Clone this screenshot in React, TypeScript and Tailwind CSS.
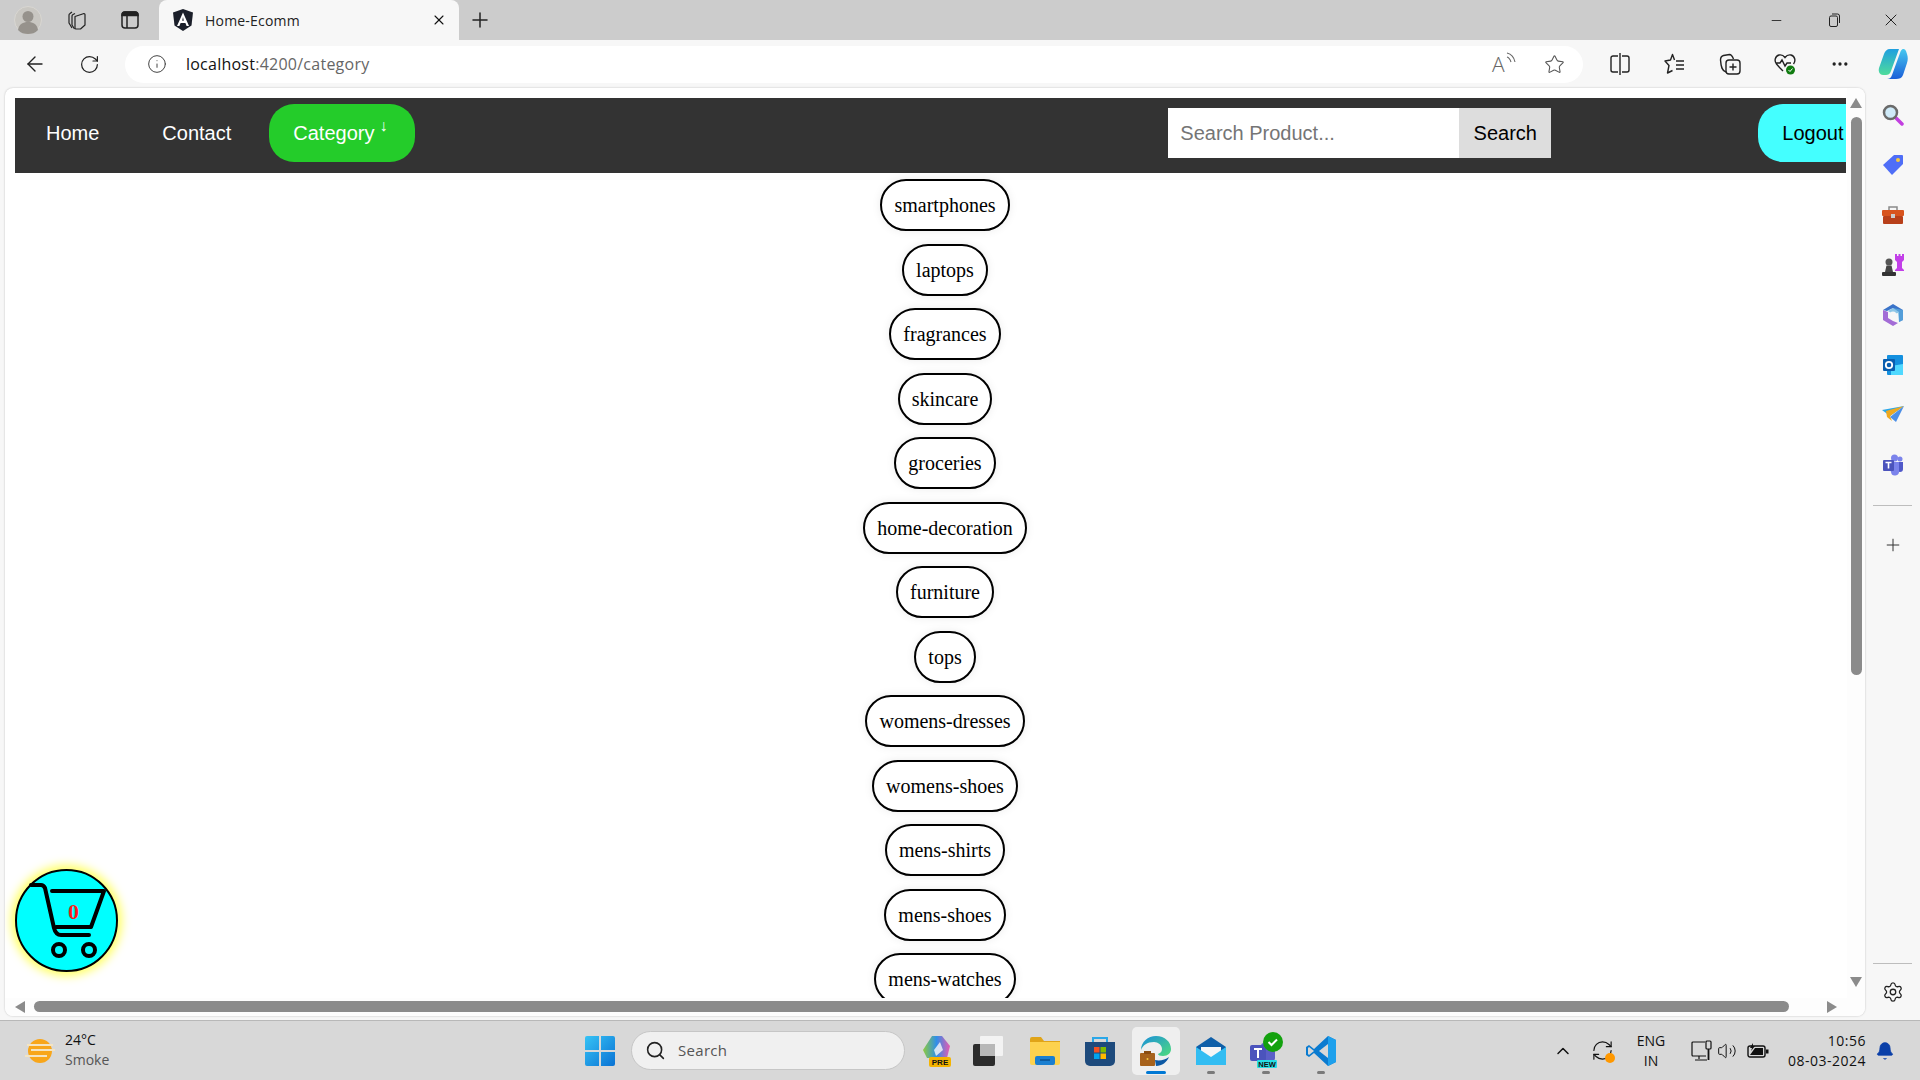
import React from 'react';
import { ArrowLeft, RotateCw, RefreshCw, Info, Star, Plus, X, Minus, Search, ChevronUp, Settings, MoreHorizontal, Volume2, Bell } from 'lucide-react';

const categories = [
  'smartphones', 'laptops', 'fragrances', 'skincare', 'groceries', 'home-decoration', 'furniture',
  'tops', 'womens-dresses', 'womens-shoes', 'mens-shirts', 'mens-shoes', 'mens-watches',
];

const Tri = ({ dir }: { dir: 'up' | 'down' | 'left' | 'right' }) => {
  const pts = { up: '0,10 6,0 12,10', down: '0,0 12,0 6,10', left: '10,0 10,12 0,6', right: '0,0 0,12 10,6' }[dir];
  return (
    <svg width="12" height="12" viewBox="0 0 12 12" className="shrink-0">
      <polygon points={pts} fill="#8b8b8b" />
    </svg>
  );
};

const TabStrip = () => (
  <div className="h-[40px] bg-[#cccccc] flex items-center shrink-0">
    <div className="w-[56px] flex justify-center">
      <svg width="28" height="28" viewBox="0 0 28 28">
        <circle cx="14" cy="14" r="13.5" fill="#c9c7c2" stroke="#d9d7d2" />
        <circle cx="14" cy="10.5" r="5.5" fill="#96928c" />
        <path d="M4 24c1-6 5-8 10-8s9 2 10 8c-3 3-6 4-10 4s-7-1-10-4z" fill="#96928c" />
      </svg>
    </div>
    <div className="w-[42px] flex justify-center">
      <svg width="20" height="20" viewBox="0 0 20 20" fill="none" stroke="#222" strokeWidth="1.2" strokeLinejoin="round">
        <path d="M8 6.500 17 3.500a1 1 0 0 1 1 1V15l-4.500 4H9a1 1 0 0 1-1-1z" />
        <path d="M8 3.500 6 4.500a2 2 0 0 0-1 2V15l2.500 4" />
        <path d="M5 2 3 3.500a2 2 0 0 0-1 2V13l3 5" />
      </svg>
    </div>
    <div className="w-[64px] flex justify-center">
      <svg width="18" height="18" viewBox="0 0 18 18" fill="none" stroke="#222" strokeWidth="1.5">
        <rect x="1" y="1" width="16" height="16" rx="3" />
        <path d="M6 5v12" />
        <path d="M1 4.500C1 2 2 1 4 1h10c2 0 3 1 3 3.500z" fill="#222" />
      </svg>
    </div>
    <div className="w-[300px] h-[40px] bg-[#f7f7f7] rounded-t-[8px] flex items-center pl-[14px] pr-[12px] relative -left-[3px]">
      <svg width="20" height="22" viewBox="0 0 20 22" className="shrink-0">
        <path d="M10 0 0 3.500 1.500 16.500 10 22l8.500-5.500L20 3.500z" fill="#1b1f2a" />
        <path d="M10 3.500 4 17h2.400l1.200-3h4.800l1.200 3H16zM9.200 11.800 10 8l.8 3.800z" fill="#fff" />
      </svg>
      <span className="ml-[12px] text-[14px] tracking-[0.2px] text-[#222] font-['Open_Sans',sans-serif] whitespace-nowrap">Home-Ecomm</span>
      <X size={16} strokeWidth={1.6} className="ml-auto text-[#111]" />
    </div>
    <Plus size={24} strokeWidth={1.5} className="text-[#222] ml-[6px]" />
    <div className="ml-auto flex items-center text-[#222]">
      <div className="w-[57px] flex justify-center"><Minus size={15} strokeWidth={1.4} /></div>
      <div className="w-[57px] flex justify-center">
        <svg width="14" height="14" viewBox="0 0 14 14" fill="none" stroke="#222" strokeWidth="1">
          <rect x="2.500" y="3" width="8" height="10.500" rx="1.500" />
          <path d="M5 1h5.500a2 2 0 0 1 2 2v7" />
        </svg>
      </div>
      <div className="w-[58px] flex justify-center"><X size={20} strokeWidth={1.2} /></div>
    </div>
  </div>
);

const Toolbar = () => (
  <div className="h-[48px] bg-[#f7f7f7] flex items-center shrink-0">
    <div className="w-[70px] flex justify-center"><ArrowLeft size={24} strokeWidth={1.4} className="text-[#222]" /></div>
    <div className="w-[40px] flex justify-center"><RotateCw size={21} strokeWidth={1.4} className="text-[#222]" /></div>
    <div className="ml-[15px] w-[1459px] h-[37px] bg-white rounded-full flex items-center">
      <Info size={20} strokeWidth={1.2} className="ml-[22px] text-[#444]" />
      <span className="ml-[19px] text-[16px] tracking-[0.25px] font-['Open_Sans',sans-serif] text-[#111] whitespace-nowrap">
        localhost<span className="text-[#666]">:4200/category</span>
      </span>
      <div className="ml-auto flex items-center pr-[18px]">
        <div className="relative w-[24px] h-[24px] text-[#666]">
          <span className="block text-[21px] leading-[24px] font-['Open_Sans',sans-serif] font-light">A</span>
          <svg width="12" height="12" viewBox="0 0 12 12" fill="none" stroke="#666" strokeWidth="1.1" className="absolute -right-[1px] top-0">
            <path d="M2 1c4 1 7 4 8 9M2 5c2 .5 3 2 4 5" />
          </svg>
        </div>
        <Star size={21} strokeWidth={1.2} className="ml-[28px] text-[#555]" />
      </div>
    </div>
    <div className="flex items-center ml-[10px]">
      <div className="w-[55px] flex justify-center">
        <svg width="20" height="22" viewBox="0 0 20 22" fill="none" stroke="#222" strokeWidth="1.4">
          <path d="M8 3H3a2 2 0 0 0-2 2v12a2 2 0 0 0 2 2h5M12 3h5a2 2 0 0 1 2 2v12a2 2 0 0 1-2 2h-5M10 0v22" />
        </svg>
      </div>
      <div className="w-[55px] flex justify-center">
        <svg width="22" height="22" viewBox="0 0 22 22" fill="none" stroke="#222" strokeWidth="1.4" strokeLinejoin="round">
          <path d="M10.500 7 8.500 1.500 6.500 7 1 8l4 4.500L3.500 20l5-2.500" />
          <path d="M12 8h8M12 12h8M12 16h8" />
        </svg>
      </div>
      <div className="w-[55px] flex justify-center">
        <svg width="22" height="22" viewBox="0 0 22 22" fill="none" stroke="#222" strokeWidth="1.4">
          <rect x="7" y="7" width="14" height="14" rx="3" />
          <path d="M14 10.500v7M10.500 14h7M7 19C3 18 2 14 1.500 7c0-2 1-4 3-4.500l6-1c2 0 3 2 4 4.500" />
        </svg>
      </div>
      <div className="w-[55px] flex justify-center">
        <svg width="22" height="22" viewBox="0 0 22 22" fill="none">
          <path d="M6 15 2.500 11C0 8 1 3 5 2c2.500-.5 4.500.5 6 2.500C12.500 2.500 14.500 1.500 17 2c4 1 5 6 2.500 9M2 10h4l2-3 3 6 2-3h4M6 15l3 3" stroke="#222" strokeWidth="1.4" />
          <circle cx="16.500" cy="17" r="4.500" fill="#107c10" />
          <path d="m14.500 17 1.500 1.500 2.500-3" stroke="#fff" strokeWidth="1" />
        </svg>
      </div>
      <div className="w-[54px] flex justify-center"><MoreHorizontal size={20} strokeWidth={2} className="text-[#222]" /></div>
      <div className="w-[53px] flex justify-center">
        <svg width="30" height="32" viewBox="0 0 30 32">
          <defs>
            <linearGradient id="cp1" x1="0" y1="0" x2="0" y2="1">
              <stop offset="0" stopColor="#1f9fe0" />
              <stop offset="1" stopColor="#4fdc9c" />
            </linearGradient>
            <linearGradient id="cp2" x1="0" y1="0" x2="0" y2="1">
              <stop offset="0" stopColor="#45c8f0" />
              <stop offset="1" stopColor="#1b5fd8" />
            </linearGradient>
          </defs>
          <path d="M12 1h9l-8 22c-1 3-3 4-5 4H5C2 27 0 24 1 20L6 6c1-3 3-5 6-5z" fill="url(#cp1)" />
          <path d="M18 31H9c2 0 4-1 5-4l8-22c1-3 2-4 3-4 2 0 3 1 4 5 1 3 1 6 0 9l-4 12c-1 3-4 4-7 4z" fill="url(#cp2)" />
        </svg>
      </div>
    </div>
  </div>
);

const CartBadge = () => (
  <div className="absolute left-[10px] top-[781px] w-[103px] h-[103px] rounded-full bg-[#00ffff] border-2 border-black shadow-[0_0_10px_4px_#ffff66]">
    <svg width="99" height="99" viewBox="0 0 99 99" fill="none" stroke="#000" strokeWidth="4" strokeLinecap="round" strokeLinejoin="round">
      <path d="M14 14h10c2 0 3 1 4 3l9 40c1 4 3 7 7 7h28" />
      <path d="M35 20h52l-13 36H39" />
      <circle cx="42" cy="79" r="6" />
      <circle cx="72" cy="79" r="6" />
    </svg>
    <span className="absolute left-[51px] top-[30px] text-[22px] leading-[22px] font-bold text-[#ff1a1a] font-['Liberation_Serif',serif]">0</span>
  </div>
);

const NavBar = () => (
  <nav className="w-[1831px] h-[75px] mt-[10px] ml-[10px] pb-[5px] bg-[#333333] flex items-center overflow-hidden shrink-0 font-['Liberation_Sans',sans-serif] text-[20px]">
    <a className="ml-[31px] text-white shrink-0">Home</a>
    <a className="ml-[63px] text-white shrink-0">Contact</a>
    <a className="ml-[38px] h-[58px] w-[146px] shrink-0 pl-[24px] rounded-[25px] bg-[#24cc2a] text-white flex items-center">
      Category
      <span className="ml-[5px] -mt-[14px] text-[16px] font-bold leading-none">↓</span>
    </a>
    <div className="ml-[753px] flex shrink-0">
      <input
        readOnly
        placeholder="Search Product..."
        className="w-[291px] h-[50px] bg-white px-[12px] text-[20px] text-black placeholder:text-[#757575] outline-none"
      />
      <button className="w-[92px] h-[50px] bg-[#dddddd] text-black text-center">Search</button>
    </div>
    <a className="ml-[207px] h-[58px] w-[120px] shrink-0 pl-[24px] rounded-l-[25px] bg-[#44ffff] text-black flex items-center">Logout</a>
  </nav>
);

const Panel = () => (
  <div className="ml-[5px] w-[1860px] h-[928px] bg-white rounded-[8px] shadow-[0_0_2px_rgba(0,0,0,0.25)] flex flex-col overflow-hidden relative">
    <div className="flex h-[910px]">
      <div className="w-[1842px] overflow-hidden flex flex-col">
        <NavBar />
        <ul className="w-[1880px] shrink-0 flex flex-col items-center gap-[12.5px] pt-[6px] font-['Liberation_Serif',serif] text-[20px] text-black">
          {categories.map((c) => (
            <li key={c} className="h-[52px] px-[12px] border-2 border-black rounded-[26px] flex items-center shrink-0 bg-white shadow-[0_0_10px_rgba(0,0,0,0.08)]">
              {c}
            </li>
          ))}
        </ul>
      </div>
      <div className="w-[18px] bg-[#fdfdfd] flex flex-col items-center pt-[10px]">
        <Tri dir="up" />
        <div className="w-[11px] h-[558px] mt-[7px] rounded-full bg-[#8b8b8b]" />
        <div className="mt-auto mb-[9px]"><Tri dir="down" /></div>
      </div>
    </div>
    <div className="h-[18px] bg-[#fdfdfd] flex items-center pl-[10px] pb-[1px]">
      <Tri dir="left" />
      <div className="ml-[7px] w-[1755px] h-[11px] rounded-full bg-[#8b8b8b]" />
      <div className="ml-[38px]"><Tri dir="right" /></div>
    </div>
    <CartBadge />
  </div>
);

const SideIcon = ({ children }: { children: React.ReactNode }) => (
  <div className="h-[50px] flex items-center justify-center shrink-0">{children}</div>
);

const Sidebar = () => (
  <div className="w-[55px] h-[932px] bg-[#f7f7f7] flex flex-col items-stretch pt-[2px]">
    <SideIcon>
      <svg width="22" height="22" viewBox="0 0 22 22">
        <path d="m13 13 7 7" stroke="#c23fe0" strokeWidth="3.500" strokeLinecap="round" />
        <circle cx="8.500" cy="8.500" r="6.500" fill="#cfeaf8" stroke="#6a6a6a" strokeWidth="2.500" />
      </svg>
    </SideIcon>
    <SideIcon>
      <svg width="22" height="22" viewBox="0 0 22 22">
        <path d="M12 1h8a1 1 0 0 1 1 1v8L10 21 1 11z" fill="#4f6ef7" />
        <circle cx="16" cy="6" r="2" fill="#f5c842" />
      </svg>
    </SideIcon>
    <SideIcon>
      <svg width="24" height="20" viewBox="0 0 24 20">
        <path d="M8 5V2h8v3" fill="none" stroke="#8a8a8a" strokeWidth="1.500" />
        <rect x="1" y="5" width="22" height="6" rx="1" fill="#d8541e" />
        <rect x="2" y="11" width="20" height="8" rx="1" fill="#b8401a" />
        <rect x="10" y="9" width="4" height="4" fill="#ccc" />
      </svg>
    </SideIcon>
    <SideIcon>
      <svg width="24" height="24" viewBox="0 0 24 24">
        <path d="M14 1h2v2h1.500V1h2v2H21V1h2v6l-2 2v6l2 2v1h-9v-1l2-2V9l-2-2z" fill="#c23fe8" />
        <circle cx="8" cy="9" r="3.500" fill="#555" />
        <path d="M5.500 12.500h5l1.500 6.500H4z" fill="#444" />
        <rect x="1" y="19" width="14" height="4" rx="1" fill="#333" />
      </svg>
    </SideIcon>
    <SideIcon>
      <svg width="22" height="24" viewBox="0 0 22 24">
        <path d="M11 1 21 7v10l-4 2V9l-6-4-6 3-4-1z" fill="#3a73c9" />
        <path d="M1 7v10l10 6 5-3-5-2-5-3V9z" fill="#a36cd6" />
        <path d="M21 7 11 5l-5 3 5 3 5-1 1 9 4-2z" fill="#5fb0e0" opacity="0.7" />
        <circle cx="11" cy="12" r="3.500" fill="#f7f7f7" />
      </svg>
    </SideIcon>
    <SideIcon>
      <svg width="22" height="22" viewBox="0 0 22 22">
        <rect x="5" y="1" width="16" height="20" rx="1" fill="#1490df" />
        <path d="M9 12 21 10v11H9z" fill="#50d9ff" />
        <rect x="1" y="5" width="12" height="12" rx="1" fill="#0a5fb0" />
        <circle cx="7" cy="11" r="3.200" fill="none" stroke="#fff" strokeWidth="1.800" />
      </svg>
    </SideIcon>
    <SideIcon>
      <svg width="22" height="18" viewBox="0 0 22 18">
        <path d="M0 4 22 0 8 10z" fill="#2aa7e8" />
        <path d="M4 5 22 0 8 10l2 5-5-4z" fill="#f0a91e" />
        <path d="M22 0 14 16 8 11z" fill="#4c8fe6" />
      </svg>
    </SideIcon>
    <SideIcon>
      <svg width="22" height="22" viewBox="0 0 22 22">
        <circle cx="18" cy="5" r="2.500" fill="#7b83eb" />
        <circle cx="12.500" cy="4" r="3.500" fill="#7b83eb" />
        <path d="M15 8h6v7a3 3 0 0 1-6 0z" fill="#5059c9" />
        <path d="M6 8h11v9a4 4 0 0 1-8 1z" fill="#7b83eb" />
        <rect x="1" y="6" width="11" height="11" rx="1" fill="#4b53bc" />
        <path d="M3.500 8.500h6M6.500 8.500v6" stroke="#fff" strokeWidth="1.600" />
      </svg>
    </SideIcon>
    <div className="mx-[8px] mt-[15px] h-px bg-[#bdbdbd]" />
    <div className="h-[78px] flex items-center justify-center shrink-0">
      <Plus size={20} strokeWidth={1.2} className="text-[#333]" />
    </div>
    <div className="mt-auto mx-[8px] h-px bg-[#bdbdbd]" />
    <div className="h-[56px] flex items-center justify-center">
      <Settings size={22} strokeWidth={1.4} className="text-[#222]" />
    </div>
  </div>
);

const TaskIcon = ({ children, w, active, dot }: { children: React.ReactNode; w: number; active?: boolean; dot?: boolean }) => (
  <div style={{ width: w }} className="h-[48px] flex items-center justify-center relative shrink-0">
    {active && <div className="absolute inset-y-0 left-1/2 -ml-[24px] w-[48px] bg-[#efefef] rounded-[5px]" />}
    <div className="relative flex items-center justify-center">{children}</div>
    {active && <div className="absolute bottom-[1px] left-1/2 -ml-[10px] w-[20px] h-[3px] rounded-full bg-[#0078d4]" />}
    {dot && <div className="absolute bottom-[1px] left-1/2 -ml-[4px] w-[8px] h-[3px] rounded-full bg-[#7a7a7a]" />}
  </div>
);

const Taskbar = () => (
  <div className="h-[60px] bg-[#d8d8d8] border-t border-[#b8b8b8] flex items-center relative shrink-0 font-['Open_Sans',sans-serif]">
    <div className="w-[25px] shrink-0" />
    <svg width="32" height="28" viewBox="0 0 32 28" className="shrink-0">
      <circle cx="15" cy="14" r="12" fill="#f8a61a" />
      <path d="M2 8h26M6 13h24M0 19h22" stroke="#f4e4c2" strokeWidth="2" />
    </svg>
    <div className="ml-[8px] w-[520px] shrink-0 text-[14px] leading-[20px] -mt-[2px]">
      <div className="text-[#111]">24°C</div>
      <div className="text-[#555]">Smoke</div>
    </div>
    <svg width="30" height="30" viewBox="0 0 30 30" className="shrink-0">
      <defs>
        <linearGradient id="win" x1="0" y1="0" x2="1" y2="1">
          <stop offset="0" stopColor="#36c3f5" />
          <stop offset="1" stopColor="#0a72d4" />
        </linearGradient>
      </defs>
      <path d="M0 2a2 2 0 0 1 2-2h12v14H0zM16 0h12a2 2 0 0 1 2 2v12H16zM0 16h14v14H2a2 2 0 0 1-2-2zM16 16h14v12a2 2 0 0 1-2 2H16z" fill="url(#win)" />
    </svg>
    <div className="ml-[16px] w-[274px] h-[39px] rounded-full bg-[#f0f0f0] border border-[#c6c6c6] flex items-center pl-[13px] shrink-0">
      <Search size={21} strokeWidth={1.8} className="text-[#222]" />
      <span className="ml-[12px] text-[15px] tracking-[0.3px] text-[#555]">Search</span>
    </div>
    <div className="ml-[4px] flex items-center shrink-0">
      <TaskIcon w={56}>
        <svg width="30" height="34" viewBox="0 0 30 34">
          <defs>
            <linearGradient id="tcp" x1="0" y1="0" x2="1" y2="0">
              <stop offset="0" stopColor="#8ecb3c" />
              <stop offset="0.5" stopColor="#2f8fe8" />
              <stop offset="1" stopColor="#e85ab0" />
            </linearGradient>
          </defs>
          <path d="M10 2h10l8 10-3 12H5L1 16z" fill="url(#tcp)" />
          <path d="M12 16 18 8l3 8-7 6z" fill="#f7f7f7" opacity="0.8" />
          <rect x="7" y="23" width="22" height="10" rx="2" fill="#f5b400" />
          <text x="18" y="31" textAnchor="middle" fontSize="8" fontWeight="700" fill="#111" fontFamily="Liberation Sans">PRE</text>
        </svg>
      </TaskIcon>
      <TaskIcon w={46}>
        <svg width="30" height="30" viewBox="0 0 30 30">
          <rect x="0" y="8" width="22" height="22" rx="2" fill="#2c2c2c" />
          <rect x="7" y="0" width="23" height="20" rx="1" fill="#f6f6f6" opacity="0.9" />
          <rect x="7" y="8" width="15" height="12" fill="#b8b8b8" />
        </svg>
      </TaskIcon>
      <TaskIcon w={68}>
        <svg width="30" height="28" viewBox="0 0 30 28">
          <path d="M0 2a2 2 0 0 1 2-2h9l3 4h16v6H0z" fill="#e0a418" />
          <path d="M0 5h30v21a2 2 0 0 1-2 2H2a2 2 0 0 1-2-2z" fill="#fdd24e" />
          <rect x="5" y="19" width="20" height="9" rx="2" fill="#1a7fd0" />
          <path d="M10 23h10" stroke="#0a4f8f" strokeWidth="1.500" />
        </svg>
      </TaskIcon>
      <TaskIcon w={42}>
        <svg width="30" height="30" viewBox="0 0 30 30">
          <path d="M8 7V2h14v5" fill="none" stroke="#2aa7e8" strokeWidth="2" />
          <path d="M0 6h30v19a5 5 0 0 1-5 5H5a5 5 0 0 1-5-5z" fill="#1d4a7c" />
          <rect x="9" y="11" width="5.500" height="5.500" fill="#f25022" />
          <rect x="15.500" y="11" width="5.500" height="5.500" fill="#7fba00" />
          <rect x="9" y="17.500" width="5.500" height="5.500" fill="#00a4ef" />
          <rect x="15.500" y="17.500" width="5.500" height="5.500" fill="#ffb900" />
        </svg>
      </TaskIcon>
      <TaskIcon w={70} active>
        <svg width="32" height="30" viewBox="0 0 32 30">
          <defs>
            <linearGradient id="edg" x1="0" y1="0" x2="1" y2="1">
              <stop offset="0" stopColor="#1a8fdc" />
              <stop offset="1" stopColor="#4fdc7c" />
            </linearGradient>
          </defs>
          <path d="M1 14C1 6 8 0 16 0c9 0 15 6 15 13 0 4-3 7-8 7-3 0-5-1-5-2 3-1 4-3 4-5 0-4-4-7-8-7C7 6 3 9 1 14z" fill="url(#edg)" />
          <path d="M29 21c-2 5-7 9-13 9l-1-6c5 1 10 0 14-3z" fill="#0c59a4" />
          <rect x="0" y="17" width="15" height="13" rx="1" fill="#a7621c" />
          <rect x="4" y="15" width="7" height="3" fill="#8a4d12" />
          <circle cx="7.500" cy="23" r="1" fill="#f5c842" />
        </svg>
      </TaskIcon>
      <TaskIcon w={40} dot>
        <svg width="30" height="28" viewBox="0 0 30 28">
          <path d="M15 0 30 10v18H0V10z" fill="#0f5fa8" />
          <path d="M5 10h20v8l-10 6-10-6z" fill="#f6f6f6" />
          <path d="M0 10l15 10 15-10v18H0z" fill="#33bdf2" />
        </svg>
      </TaskIcon>
      <TaskIcon w={70} dot>
        <svg width="34" height="36" viewBox="0 0 34 36" className="overflow-visible">
          <rect x="12" y="10" width="14" height="18" rx="3" fill="#5b5fc7" />
          <rect x="1" y="12" width="16" height="16" rx="2" fill="#4b53bc" />
          <path d="M5 16h8M9 16v9" stroke="#fff" strokeWidth="2" />
          <rect x="8" y="27" width="20" height="8" rx="1" fill="#27dfe5" />
          <text x="18" y="34" textAnchor="middle" fontSize="7.500" fontWeight="700" fill="#111" fontFamily="Liberation Sans">NEW</text>
          <circle cx="24" cy="9" r="10" fill="#13a10e" />
          <path d="m19.500 9 3 3 5.500-5.500" stroke="#fff" strokeWidth="2" fill="none" />
        </svg>
      </TaskIcon>
      <TaskIcon w={40} dot>
        <svg width="30" height="30" viewBox="0 0 30 30">
          <path d="M22 0 30 4v22l-8 4-14-13-5 4-3-2v-8l3-2 5 4z" fill="#0a7bd0" />
          <path d="M22 0 30 4v22l-8 4z" fill="#1ea0ec" />
          <path d="M22 8v14l-9-7z" fill="#d8d8d8" />
          <path d="M3 11l5 4-5 4-1-1v-6z" fill="#d8d8d8" />
        </svg>
      </TaskIcon>
    </div>
    <div className="absolute right-0 top-0 bottom-0 flex items-center text-[#111]">
      <ChevronUp size={20} strokeWidth={1.8} />
      <div className="ml-[18px] w-[24px] h-[24px] relative">
        <RefreshCw size={23} strokeWidth={1.2} />
        <div className="absolute right-0 bottom-0 w-[10px] h-[10px] rounded-full bg-[#ff9800]" />
      </div>
      <div className="ml-[14px] w-[44px] text-center text-[14px] leading-[20px]">ENG<br />IN</div>
      <svg width="22" height="22" viewBox="0 0 22 22" fill="none" stroke="#111" strokeWidth="1.200" className="ml-[18px]">
        <path d="M15 16H2a1 1 0 0 1-1-1V3a1 1 0 0 1 1-1h12M8 16v3M4 20h12" />
        <rect x="15" y="1" width="5" height="8" rx="1" />
        <path d="M17.500 9v11" strokeWidth="1.800" />
      </svg>
      <Volume2 size={20} strokeWidth={1.2} className="ml-[4px]" />
      <svg width="22" height="16" viewBox="0 0 22 16" className="ml-[10px]">
        <rect x="1" y="3" width="17" height="11" rx="2" fill="none" stroke="#111" strokeWidth="1.400" />
        <path d="M3 12 8 5h8v7z" fill="#111" />
        <rect x="19" y="6.500" width="2.500" height="4" fill="#111" />
        <path d="M6 0 3 5h2l-1 3 4-5H6z" fill="#111" />
      </svg>
      <div className="ml-[9px] w-[88px] text-right text-[14px] tracking-[0.5px] leading-[20px] whitespace-nowrap">
        <div>10:56</div>
        <div>08-03-2024</div>
      </div>
      <div className="w-[54px] pl-[9px] flex">
        <Bell size={20} fill="#0a3fa8" strokeWidth={1} className="text-[#0a3fa8]" />
      </div>
    </div>
  </div>
);

export default function App() {
  return (
    <div className="w-[1920px] h-[1080px] flex flex-col overflow-hidden bg-[#f7f7f7]">
      <TabStrip />
      <Toolbar />
      <div className="flex h-[932px] shrink-0">
        <Panel />
        <Sidebar />
      </div>
      <Taskbar />
    </div>
  );
}
